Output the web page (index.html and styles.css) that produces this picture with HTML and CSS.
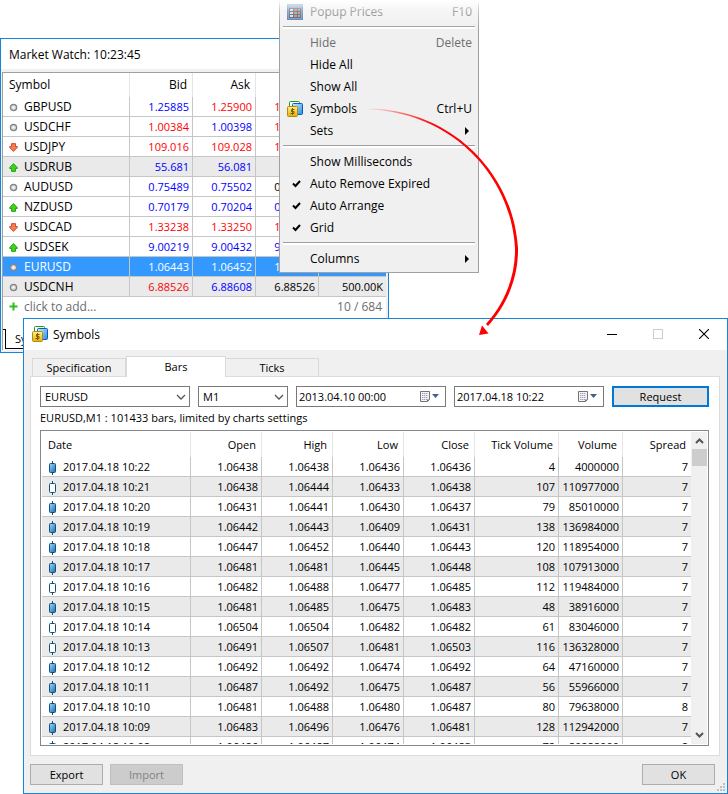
FILE: index.html
```html
<!DOCTYPE html>
<html lang="en">
<head>
<meta charset="utf-8">
<title>Symbols</title>
<link rel="stylesheet" href="styles.css">
</head>
<body>

<!-- shared icons -->
<svg class="defs" width="0" height="0">
  <defs>
    <linearGradient id="gold" x1="0" y1="0" x2="0" y2="1"><stop offset="0" stop-color="#fff08a"/><stop offset="1" stop-color="#e0b010"/></linearGradient>
    <linearGradient id="sky" x1="0" y1="0" x2="1" y2="1"><stop offset="0" stop-color="#c9ecff"/><stop offset="1" stop-color="#2a8be6"/></linearGradient>
    <linearGradient id="candle" x1="0" y1="0" x2="1" y2="1"><stop offset="0" stop-color="#9ad8ff"/><stop offset="1" stop-color="#1c6fae"/></linearGradient>
    <radialGradient id="ball"><stop offset="0" stop-color="#fff"/><stop offset="1" stop-color="#b4b4b4"/></radialGradient>
  </defs>
  <symbol id="i-symbols" viewBox="0 0 16 16">
    <rect x="2.500" y=".5" width="10" height="8" rx="1" fill="#fff" stroke="#1d9b1d"/>
    <rect x="5.500" y="2.500" width="10" height="11" rx="1" fill="url(#sky)" stroke="#0a5cc0"/>
    <rect x=".5" y="5.500" width="10" height="10" rx="1" fill="url(#gold)" stroke="#b58a08"/>
    <path d="M7.500 8.500H4.500V10.500H7V12.500H3.500M5.500 7V14" fill="none" stroke="#7d5c00"/>
  </symbol>
  <symbol id="i-popup" viewBox="0 0 16 16">
    <rect x=".5" y=".5" width="15" height="15" fill="#5d86b8" stroke="#3f6ca5"/>
    <path d="M2 4h12v10H2z" fill="#39424d"/>
    <path d="M3 5h3v2H3zM3 8h3v2H3zM3 11h3v2H3z" fill="#cfd6dd"/>
    <path d="M7 5h3v2H7zM11 8h2v2h-2zM7 11h3v2H7z" fill="#e8564a"/>
    <path d="M11 5h2v2h-2zM7 8h3v2H7zM11 11h2v2h-2z" fill="#4aa6a0"/>
  </symbol>
  <symbol id="i-dot" viewBox="0 0 9 9"><circle cx="4.500" cy="4.500" r="3.200" fill="url(#ball)" stroke="#858585" stroke-width="1.200"/></symbol>
  <symbol id="i-up" viewBox="0 0 9 9"><path d="M4.500 .6L8.300 4.500V5.500H6.500V8.400H2.500V5.500H.7V4.500z" fill="#3fd316" stroke="#17920b" stroke-width=".8"/></symbol>
  <symbol id="i-down" viewBox="0 0 9 9"><path d="M4.500 8.400L8.300 4.500V3.500H6.500V.6H2.500V3.500H.7V4.500z" fill="#fa7a4e" stroke="#c8371a" stroke-width=".8"/></symbol>
  <symbol id="i-plus" viewBox="0 0 9 9"><path d="M4.500 .5V8.500M.5 4.500H8.500" stroke="#2ebd1e" stroke-width="2"/></symbol>
  <symbol id="i-check" viewBox="0 0 9 9"><path d="M1 4.500L3.500 7L8 2" fill="none" stroke="#000" stroke-width="2"/></symbol>
  <symbol id="i-sub" viewBox="0 0 4 8"><path d="M0 0L4 4L0 8z"/></symbol>
  <symbol id="i-full" viewBox="0 0 7 14"><path d="M3.500 0V14" stroke="#14507c"/><rect x=".5" y="2.500" width="6" height="9" rx="1" fill="url(#candle)" stroke="#14507c"/></symbol>
  <symbol id="i-empty" viewBox="0 0 7 14"><path d="M3.500 0V14" stroke="#14507c"/><rect x=".5" y="2.500" width="6" height="9" rx="1" fill="#fff" stroke="#14507c"/></symbol>
  <symbol id="i-chev" viewBox="0 0 10 6"><path d="M1 1L5 5L9 1" fill="none" stroke="#555" stroke-width="1.300"/></symbol>
  <symbol id="i-cal" viewBox="0 0 20 13">
    <path d="M1.500 1.500H10.500V9.500L8.500 11.500H1.500z" fill="#f4f4f6" stroke="#7d7070"/>
    <path d="M3 3.500H9M3 5.500H9M3 7.500H9M3 9.500H8" stroke="#93a5bd" stroke-dasharray="1.400 .6"/>
    <path d="M8 12V9.500H10.500z" fill="#7d7070"/>
    <path d="M13 4H20L16.500 8z" fill="#42618f"/>
  </symbol>
</svg>

<section class="window watch">
  <h1 class="title">Market Watch: 10:23:45</h1>
  <div class="watch-body">
    <table class="grid quotes">
      <colgroup><col><col class="price"><col class="price"><col class="price"><col class="vol"></colgroup>
      <thead><tr><th>Symbol</th><th>Bid</th><th>Ask</th><th></th><th></th></tr></thead>
      <tbody id="quotes"></tbody>
    </table>
    <div class="add"><svg width="9" height="9"><use href="#i-plus"/></svg><span>click to add...</span><span class="count">10 / 684</span></div>
    <div class="watch-tabs"><button class="watch-tab">Symbols</button></div>
  </div>
</section>

<ul class="menu">
  <li><button disabled><svg width="16" height="16"><use href="#i-popup"/></svg><span>Popup Prices</span><kbd>F10</kbd></button></li>
  <li class="sep"></li>
  <li><button disabled><i></i><span>Hide</span><kbd>Delete</kbd></button></li>
  <li><button><i></i><span>Hide All</span></button></li>
  <li><button><i></i><span>Show All</span></button></li>
  <li><button><svg width="16" height="16"><use href="#i-symbols"/></svg><span>Symbols</span><kbd>Ctrl+U</kbd></button></li>
  <li><button><i></i><span>Sets</span><svg class="sub" width="4" height="8"><use href="#i-sub"/></svg></button></li>
  <li class="sep"></li>
  <li><button><i></i><span>Show Milliseconds</span></button></li>
  <li><button><i><svg width="9" height="9"><use href="#i-check"/></svg></i><span>Auto Remove Expired</span></button></li>
  <li><button><i><svg width="9" height="9"><use href="#i-check"/></svg></i><span>Auto Arrange</span></button></li>
  <li><button><i><svg width="9" height="9"><use href="#i-check"/></svg></i><span>Grid</span></button></li>
  <li class="sep"></li>
  <li><button><i></i><span>Columns</span><svg class="sub" width="4" height="8"><use href="#i-sub"/></svg></button></li>
</ul>

<section class="window dialog">
  <header class="title">
    <svg width="16" height="16"><use href="#i-symbols"/></svg>
    <h2>Symbols</h2>
    <button class="win" aria-label="Minimize"><svg width="10" height="10"><path d="M0 5.500H10" stroke="#000"/></svg></button>
    <button class="win" aria-label="Maximize" disabled><svg width="10" height="10"><rect x=".5" y=".5" width="9" height="9" fill="none" stroke="#ccc"/></svg></button>
    <button class="win" aria-label="Close"><svg width="10" height="10"><path d="M0 0L10 10M10 0L0 10" stroke="#000" stroke-width="1.100"/></svg></button>
  </header>

  <nav class="tabs">
    <button>Specification</button>
    <button class="active">Bars</button>
    <button>Ticks</button>
  </nav>

  <div class="panel">
    <form class="filter">
      <div class="combo"><select aria-label="Symbol"><option>EURUSD</option></select><svg width="10" height="6"><use href="#i-chev"/></svg></div>
      <div class="combo small"><select aria-label="Period"><option>M1</option></select><svg width="10" height="6"><use href="#i-chev"/></svg></div>
      <div class="date"><input type="text" aria-label="From" value="2013.04.10 00:00"><button type="button" aria-label="Pick start"><svg width="20" height="13"><use href="#i-cal"/></svg></button></div>
      <div class="date"><input type="text" aria-label="To" value="2017.04.18 10:22"><button type="button" aria-label="Pick end"><svg width="20" height="13"><use href="#i-cal"/></svg></button></div>
      <button type="button" class="btn request">Request</button>
    </form>
    <p class="status">EURUSD,M1 : 101433 bars, limited by charts settings</p>
    <div class="list">
      <div class="rows">
        <table class="grid bars">
          <colgroup><col><col class="price"><col class="price"><col class="price"><col class="price"><col class="ticks"><col class="volume"><col class="spread"></colgroup>
          <thead><tr><th>Date</th><th>Open</th><th>High</th><th>Low</th><th>Close</th><th>Tick Volume</th><th>Volume</th><th>Spread</th></tr></thead>
          <tbody id="bars"></tbody>
        </table>
      </div>
      <div class="scroll">
        <svg width="9" height="17"><path d="M1 11L4.500 7.500L8 11" fill="none" stroke="#555" stroke-width="2"/></svg>
        <div class="thumb"></div>
        <svg class="end" width="9" height="17"><path d="M1 6L4.500 9.500L8 6" fill="none" stroke="#555" stroke-width="2"/></svg>
      </div>
    </div>
  </div>

  <footer class="actions">
    <button class="btn">Export</button>
    <button class="btn" disabled>Import</button>
    <button class="btn ok">OK</button>
  </footer>
  <svg class="grip" width="8" height="8"><path d="M6 0h2v2H6zM3 3h2v2H3zM6 3h2v2H6zM0 6h2v2H0zM3 6h2v2H3zM6 6h2v2H6z" fill="#bfbfbf"/></svg>
</section>

<!-- arrow from the menu item to the dialog -->
<svg class="arrow" width="160" height="240" viewBox="0 0 160 240">
  <defs><linearGradient id="fade" gradientUnits="userSpaceOnUse" x1="6" y1="0" x2="75" y2="0"><stop offset="0" stop-color="#f00" stop-opacity="0"/><stop offset="1" stop-color="#f00"/></linearGradient></defs>
  <path d="M5 8.500C88 8 153 70 158 148C158.500 176 148 204 128 226L126 224C145 203 155.500 176 155 148C151 73 88 10 5 9.500z" fill="url(#fade)"/>
  <path d="M119 235L122 225.500L128.500 233.500z" fill="#f00"/>
</svg>

<script>
var quotes = [
  ["dot", "GBPUSD", "1.25885", "b", "1.25900", "r", "1.25885", "r"],
  ["dot", "USDCHF", "1.00384", "r", "1.00398", "b", "1.00384", "r"],
  ["down", "USDJPY", "109.016", "r", "109.028", "r", "109.016", "r"],
  ["up", "USDRUB", "55.681", "b", "56.081", "b", "", ""],
  ["dot", "AUDUSD", "0.75489", "b", "0.75502", "b", "0.75489", ""],
  ["up", "NZDUSD", "0.70179", "b", "0.70204", "b", "0.70179", "b"],
  ["down", "USDCAD", "1.33238", "r", "1.33250", "r", "1.33238", "r"],
  ["up", "USDSEK", "9.00219", "b", "9.00432", "b", "9.00219", "b"],
  ["dot", "EURUSD", "1.06443", "", "1.06452", "", "1.06443", ""],
  ["dot", "USDCNH", "6.88526", "r", "6.88608", "b", "6.88526", ""]
];
var rowClass = { USDRUB: "shade", EURUSD: "selected", USDCNH: "shade" };
var html = "";
quotes.forEach(function (q) {
  html += '<tr class="' + (rowClass[q[1]] || "") + '"><td><svg width="9" height="9"><use href="#i-' + q[0] + '"/></svg>' + q[1] + '</td>' +
    '<td class="' + q[3] + '">' + q[2] + '</td><td class="' + q[5] + '">' + q[4] + '</td><td class="' + q[7] + '">' + q[6] + '</td>' +
    '<td>' + (q[1] == "USDCNH" ? "500.00K" : "") + '</td></tr>';
});
document.getElementById("quotes").innerHTML = html;

// time, open, high, low, close, ticks, volume, spread
var bars = [
  "10:22 1.06438 1.06438 1.06436 1.06436 4 4000000 7",
  "10:21 1.06438 1.06444 1.06433 1.06438 107 110977000 7",
  "10:20 1.06431 1.06441 1.06430 1.06437 79 85010000 7",
  "10:19 1.06442 1.06443 1.06409 1.06431 138 136984000 7",
  "10:18 1.06447 1.06452 1.06440 1.06443 120 118954000 7",
  "10:17 1.06481 1.06481 1.06445 1.06448 108 107913000 7",
  "10:16 1.06482 1.06488 1.06477 1.06485 112 119484000 7",
  "10:15 1.06481 1.06485 1.06475 1.06483 48 38916000 7",
  "10:14 1.06504 1.06504 1.06482 1.06482 61 83046000 7",
  "10:13 1.06491 1.06507 1.06481 1.06503 116 136328000 7",
  "10:12 1.06492 1.06492 1.06474 1.06492 64 47160000 7",
  "10:11 1.06487 1.06492 1.06475 1.06487 56 55966000 7",
  "10:10 1.06481 1.06488 1.06480 1.06487 80 79638000 8",
  "10:09 1.06483 1.06496 1.06476 1.06481 128 112942000 7",
  "10:08 1.06486 1.06487 1.06474 1.06483 72 80288000 8"
];
var empty = ["10:21", "10:16", "10:14", "10:13"];
html = "";
bars.forEach(function (line) {
  var c = line.split(" ");
  var icon = empty.indexOf(c[0]) >= 0 ? "empty" : "full";
  html += '<tr><td><svg width="7" height="14"><use href="#i-' + icon + '"/></svg>2017.04.18 ' + c[0] + '</td><td>' + c.slice(1).join("</td><td>") + '</td></tr>';
});
document.getElementById("bars").innerHTML = html;
</script>
</body>
</html>
```
FILE: styles.css
```css
* {
	box-sizing: border-box;
}
body {
	margin: 0;
	min-height: 100vh;
	position: relative;
	overflow: hidden;
	background: #fff;
	color: #000;
	font-family: "Open Sans", "Noto Sans", sans-serif;
	font-size: 12px;
}
.defs {
	position: absolute;
}
svg {
	display: block;
	flex: none;
}
button, select, input {
	font: inherit;
	color: inherit;
	margin: 0;
	padding: 0;
	border: 0;
	border-radius: 0;
	background: none;
}
h1, h2, p, ul {
	margin: 0;
	padding: 0;
	font-size: 12px;
	font-weight: normal;
}
.window {
	position: absolute;
	display: flex;
	flex-direction: column;
	border: 1px solid #1883d7;
	background: #f0f0f0;
}
.title {
	display: flex;
	align-items: center;
	height: 30px;
	padding-left: 8px;
	background: #fff;
}

/* tables */
.grid {
	width: 100%;
	table-layout: fixed;
	border-collapse: separate;
	border-spacing: 0;
	font-size: 11px;
	background: #fff;
}
.grid th, .grid td {
	height: 20px;
	padding: 0 3px 0 0;
	line-height: 19px;
	text-align: right;
	white-space: nowrap;
	border-right: 1px solid #c6c6c6;
	border-bottom: 1px solid #c6c6c6;
}
.grid th {
	height: 24px;
	padding-right: 5px;
	font-weight: normal;
	border-right-color: #e5e5e5;
	border-bottom: 0;
}
.grid th:first-child, .grid td:first-child {
	text-align: left;
	padding-left: 6px;
}
.grid td svg {
	display: inline-block;
	vertical-align: middle;
}
.grid th:last-child, .grid td:last-child {
	border-right: 0;
}

/* market watch */
.watch {
	left: 0;
	top: 38px;
	width: 389px;
}
.watch-body {
	margin: 3px 2px 2px 1px;
	border-top: 1px solid #a0a0a0;
	border-left: 1px solid #a0a0a0;
	background: #fff;
}
.quotes th {
	font-size: 12px;
	padding-bottom: 1px;
}
.quotes .price {
	width: 63px;
}
.quotes .vol {
	width: 67px;
}
.quotes td:first-child {
	font-size: 12px;
}
.quotes td svg {
	margin-right: 6px;
}
.quotes .b {
	color: #0000ff;
}
.quotes .r {
	color: #ff0000;
}
.quotes .shade td {
	background: #eaeaea;
}
.quotes .selected td {
	color: #fff;
	background: #3399ff;
}
.add {
	display: flex;
	align-items: center;
	gap: 6px;
	height: 19px;
	padding: 0 4px 0 6px;
	color: #6d6d6d;
}
.count {
	margin-left: auto;
}
.watch-tabs {
	height: 34px;
	padding: 13px 0 0 2px;
}
.watch-tab {
	position: relative;
	height: 20px;
	padding: 0 9px;
	border: solid #000;
	border-width: 0 1px 1px 1px;
	font-size: 11px;
}
.watch-tab::before {
	content: "";
	position: absolute;
	left: -3px;
	top: 0;
	width: 3px;
	height: 1px;
	background: #000;
}

/* context menu */
.menu {
	position: absolute;
	left: 279px;
	top: 0;
	width: 200px;
	padding: 1px 1px 2px;
	list-style: none;
	border: 1px solid #a0a0a0;
	border-top: 0;
	background: #f0f0f0;
}
.menu::before {
	content: "";
	position: absolute;
	left: -1px;
	right: -1px;
	top: 0;
	height: 30px;
	background: linear-gradient(#fff, rgba(255, 255, 255, .4) 35%, rgba(255, 255, 255, 0));
}
.menu button {
	display: flex;
	align-items: center;
	width: 100%;
	height: 22px;
	padding: 0 5px 1px 6px;
	text-align: left;
}
.menu button:disabled {
	color: #6d6d6d;
}
.menu i {
	width: 16px;
	padding-left: 5px;
}
.menu span {
	flex: 1;
	margin-left: 7px;
}
.menu kbd {
	font: inherit;
}
.menu .sub {
	margin-right: 3px;
}
.menu .sep {
	height: 9px;
	padding: 3px 2px 0;
}
.menu .sep::before {
	content: "";
	display: block;
	height: 2px;
	border-top: 1px solid #a0a0a0;
	background: #fff;
}

/* symbols dialog */
.dialog {
	left: 23px;
	right: 0;
	top: 318px;
	bottom: 0;
	font-size: 11px;
}
.dialog .title {
	height: 31px;
	padding-bottom: 1px;
}
.dialog h2 {
	flex: 1;
	margin-left: 5px;
}
.win {
	display: flex;
	justify-content: center;
	align-items: center;
	width: 46px;
	height: 28px;
}
.tabs {
	display: flex;
	align-items: flex-end;
	height: 27px;
	padding: 0 8px;
	position: relative;
	margin-bottom: -1px;
}
.tabs button {
	width: 94px;
	height: 18px;
	border: 1px solid #d9d9d9;
	border-bottom: 0;
	margin-bottom: 1px;
}
.tabs .active {
	width: 100px;
	height: 21px;
	margin: 0 -1px 0 0;
	padding-bottom: 2px;
	background: #fff;
}
.panel {
	flex: 1;
	min-height: 0;
	display: flex;
	flex-direction: column;
	margin: 0 7px 0 6px;
	padding: 9px 10px 9px 9px;
	border: 1px solid #dcdcdc;
	background: #fff;
}
.filter {
	display: flex;
	gap: 8px;
}
.combo, .date {
	position: relative;
	display: flex;
	align-items: center;
	width: 150px;
	height: 21px;
	border: 1px solid #7a7a7a;
}
.combo.small {
	width: 90px;
}
.combo select {
	appearance: none;
	flex: 1;
	height: 19px;
	padding: 0 20px 0 4px;
}
.combo svg {
	position: absolute;
	right: 3px;
	pointer-events: none;
}
.date input {
	flex: 1;
	min-width: 0;
	padding-left: 2px;
}
.date button {
	margin-right: 6px;
}
.btn {
	width: 73px;
	height: 21px;
	border: 1px solid #adadad;
	background: #e1e1e1;
}
.btn:disabled {
	color: #838383;
	border-color: #bfbfbf;
	background: #ccc;
}
.request {
	flex: 1;
	border: 2px solid #0078d7;
}
.status {
	height: 23px;
	line-height: 22px;
	font-size: 11px;
	white-space: nowrap;
}
.list {
	flex: 1;
	min-height: 0;
	display: flex;
	padding: 1px;
	border: 1px solid #828790;
}
.rows {
	flex: 1;
	overflow: hidden;
}
.bars th {
	height: 25px;
}
.bars td:first-child {
	padding-left: 7px;
}
.bars td svg {
	margin-right: 7px;
}
.bars .price {
	width: 71px;
}
.bars .ticks {
	width: 84px;
}
.bars .volume {
	width: 64px;
}
.bars .spread {
	width: 68px;
}
.bars tr:nth-child(even) td {
	background: #eaeaea;
}
.scroll {
	display: flex;
	flex-direction: column;
	align-items: center;
	width: 16px;
	background: #f0f0f0;
}
.thumb {
	width: 15px;
	height: 17px;
	background: #cdcdcd;
}
.scroll .end {
	margin-top: auto;
}
.actions {
	display: flex;
	gap: 7px;
	padding: 8px 12px 8px 6px;
}
.ok {
	margin-left: auto;
}
.grip {
	position: absolute;
	right: 2px;
	bottom: 2px;
}
.arrow {
	position: absolute;
	left: 360px;
	top: 100px;
}
```
